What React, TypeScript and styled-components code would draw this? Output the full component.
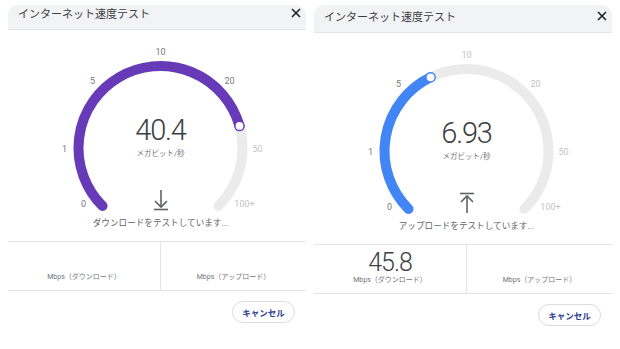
import styled, { createGlobalStyle } from 'styled-components'

const GlobalStyle = createGlobalStyle`
  body {
    margin: 0;
    background: #ffffff;
    font-family: Roboto, "Noto Sans CJK JP", sans-serif;
  }
`

const TICKS = [
  { label: '0', dx: -77, dy: 56 },
  { label: '1', dx: -96, dy: 1 },
  { label: '5', dx: -68, dy: -67 },
  { label: '10', dx: 0, dy: -96 },
  { label: '20', dx: 69, dy: -67 },
  { label: '50', dx: 97, dy: 1 },
  { label: '100+', dx: 84, dy: 56 },
]

const CX = 152.5
const CY = 118
const R = 82

const point = (deg: number) => {
  const rad = (deg * Math.PI) / 180
  return { x: CX + R * Math.cos(rad), y: CY - R * Math.sin(rad) }
}

const arcPath = (from: number, to: number) => {
  const a = point(from)
  const b = point(to)
  const large = from - to > 180 ? 1 : 0
  return `M ${a.x} ${a.y} A ${R} ${R} 0 ${large} 1 ${b.x} ${b.y}`
}

type GaugeProps = { angle: number; color: string; active: number }

const Gauge = ({ angle, color, active }: GaugeProps) => {
  const knob = point(angle)
  return (
    <GaugeSvg width="298" height="190" viewBox="0 0 298 190">
      {TICKS.map((t, i) => (
        <TickLabel key={t.label} x={CX + t.dx} y={CY + t.dy} $active={i < active}>
          {t.label}
        </TickLabel>
      ))}
      <path d={arcPath(225, -45)} fill="none" stroke="#ebebeb" strokeWidth="10" strokeLinecap="round" />
      <path d={arcPath(225, angle)} fill="none" stroke={color} strokeWidth="10" strokeLinecap="round" />
      <circle cx={knob.x} cy={knob.y} r="4.6" fill="#ffffff" stroke={color} strokeWidth="1.4" />
    </GaugeSvg>
  )
}

const Arrow = ({ up }: { up?: boolean }) => (
  <ArrowSvg width="16" height="22" viewBox="0 0 16 22">
    {up ? (
      <g fill="none" stroke="#5f6368" strokeWidth="1.6">
        <line x1="1" y1="1.5" x2="15" y2="1.5" />
        <polyline points="2,10 8,4 14,10" />
        <line x1="8" y1="4" x2="8" y2="21" />
      </g>
    ) : (
      <g fill="none" stroke="#5f6368" strokeWidth="1.6">
        <line x1="8" y1="1" x2="8" y2="18" />
        <polyline points="2,12 8,18 14,12" />
        <line x1="1" y1="20.5" x2="15" y2="20.5" />
      </g>
    )}
  </ArrowSvg>
)

const CloseIcon = () => (
  <CloseSvg width="10" height="10" viewBox="0 0 10 10">
    <path d="M1 1 L9 9 M9 1 L1 9" stroke="#202124" strokeWidth="1.6" fill="none" />
  </CloseSvg>
)

type PanelProps = {
  shift: number
  angle: number
  color: string
  active: number
  value: string
  up?: boolean
  status: string
  download?: string
}

const SpeedPanel = ({ shift, angle, color, active, value, up, status, download }: PanelProps) => (
  <Panel>
    <Header $shift={shift}>
      <Title>インターネット速度テスト</Title>
      <CloseIcon />
    </Header>
    <GaugeBox>
      <Gauge angle={angle} color={color} active={active} />
      <Readout>
        <Value>{value}</Value>
        <Unit>メガビット/秒</Unit>
        <Arrow up={up} />
      </Readout>
    </GaugeBox>
    <Status>{status}</Status>
    <Stats>
      <Stat>
        {download && <StatValue>{download}</StatValue>}
        <StatLabel>Mbps（ダウンロード）</StatLabel>
      </Stat>
      <Stat>
        <StatLabel>Mbps（アップロード）</StatLabel>
      </Stat>
    </Stats>
    <Footer>
      <CancelButton>キャンセル</CancelButton>
    </Footer>
  </Panel>
)

const App = () => {
  return (
    <>
      <GlobalStyle />
      <Page>
        <SpeedPanel
          shift={0}
          angle={15.6}
          color="#673ab7"
          active={5}
          value="40.4"
          status="ダウンロードをテストしています..."
        />
        <SpeedPanel
          shift={3}
          angle={116}
          color="#4285f4"
          active={3}
          value="6.93"
          up
          status="アップロードをテストしています..."
          download="45.8"
        />
      </Page>
    </>
  )
}

export default App

const Page = styled.div`
  width: 620px;
  height: 349px;
  display: flex;
  gap: 8px;
  padding: 5px 0 0 8px;
  box-sizing: border-box;
  overflow: hidden;
`

const Panel = styled.div`
  width: 298px;
  display: flex;
  flex-direction: column;
`

const Header = styled.div<{ $shift: number }>`
  height: ${(p) => 25 + p.$shift}px;
  padding: ${(p) => 2 + p.$shift}px 5px 0 10px;
  box-sizing: border-box;
  display: flex;
  justify-content: space-between;
  align-items: flex-start;
  background: #f1f3f4;
  border-radius: 10px 10px 0 0;
  border-bottom: 1px solid #e6e6e6;
`

const Title = styled.div`
  font-family: "Noto Sans CJK JP", sans-serif;
  font-size: 11px;
  line-height: 13px;
  font-weight: 400;
  color: #3c4043;
`

const CloseSvg = styled.svg`
  margin-top: 1px;
`

const GaugeBox = styled.div`
  position: relative;
  height: 184px;
`

const GaugeSvg = styled.svg`
  position: absolute;
  left: 0;
  top: 0;
`

const TickLabel = styled.text<{ $active: boolean }>`
  font-family: Roboto, sans-serif;
  font-size: 9px;
  text-anchor: middle;
  dominant-baseline: central;
  fill: ${(p) => (p.$active ? '#75797e' : '#c2c2c2')};
`

const Readout = styled.div`
  position: relative;
  width: 305px;
  padding-top: 85px;
  display: flex;
  flex-direction: column;
  align-items: center;
`

const Value = styled.div`
  font-size: 29px;
  font-weight: 300;
  line-height: 30px;
  letter-spacing: -1.2px;
  color: #3c4043;
`

const Unit = styled.div`
  margin-top: 4px;
  font-size: 7.5px;
  line-height: 10px;
  color: #70757a;
`

const ArrowSvg = styled.svg`
  margin-top: 30px;
`

const Status = styled.div`
  width: 305px;
  margin-top: 2px;
  text-align: center;
  font-size: 8.6px;
  line-height: 14px;
  color: #5f6368;
`

const Stats = styled.div`
  margin-top: 11px;
  display: grid;
  grid-template-columns: 152px 1fr;
  border-top: 1px solid #e4e4e4;
  border-bottom: 1px solid #e4e4e4;
`

const Stat = styled.div`
  height: 48px;
  padding-bottom: 8px;
  box-sizing: border-box;
  display: flex;
  flex-direction: column;
  justify-content: flex-end;
  align-items: center;

  & + & {
    border-left: 1px solid #e4e4e4;
  }
`

const StatValue = styled.div`
  font-size: 25px;
  font-weight: 300;
  line-height: 24px;
  letter-spacing: -1px;
  color: #3c4043;
`

const StatLabel = styled.div`
  font-size: 7px;
  line-height: 10px;
  color: #70757a;
`

const Footer = styled.div`
  margin-top: 10px;
  padding-right: 11px;
  display: flex;
  justify-content: flex-end;
`

const CancelButton = styled.button`
  height: 22px;
  width: 63px;
  padding: 0;
  border: 1px solid #dadce0;
  border-radius: 11px;
  background: #ffffff;
  font-family: "Noto Sans CJK JP", sans-serif;
  font-size: 8.5px;
  font-weight: 700;
  color: #2b3d8f;
`
